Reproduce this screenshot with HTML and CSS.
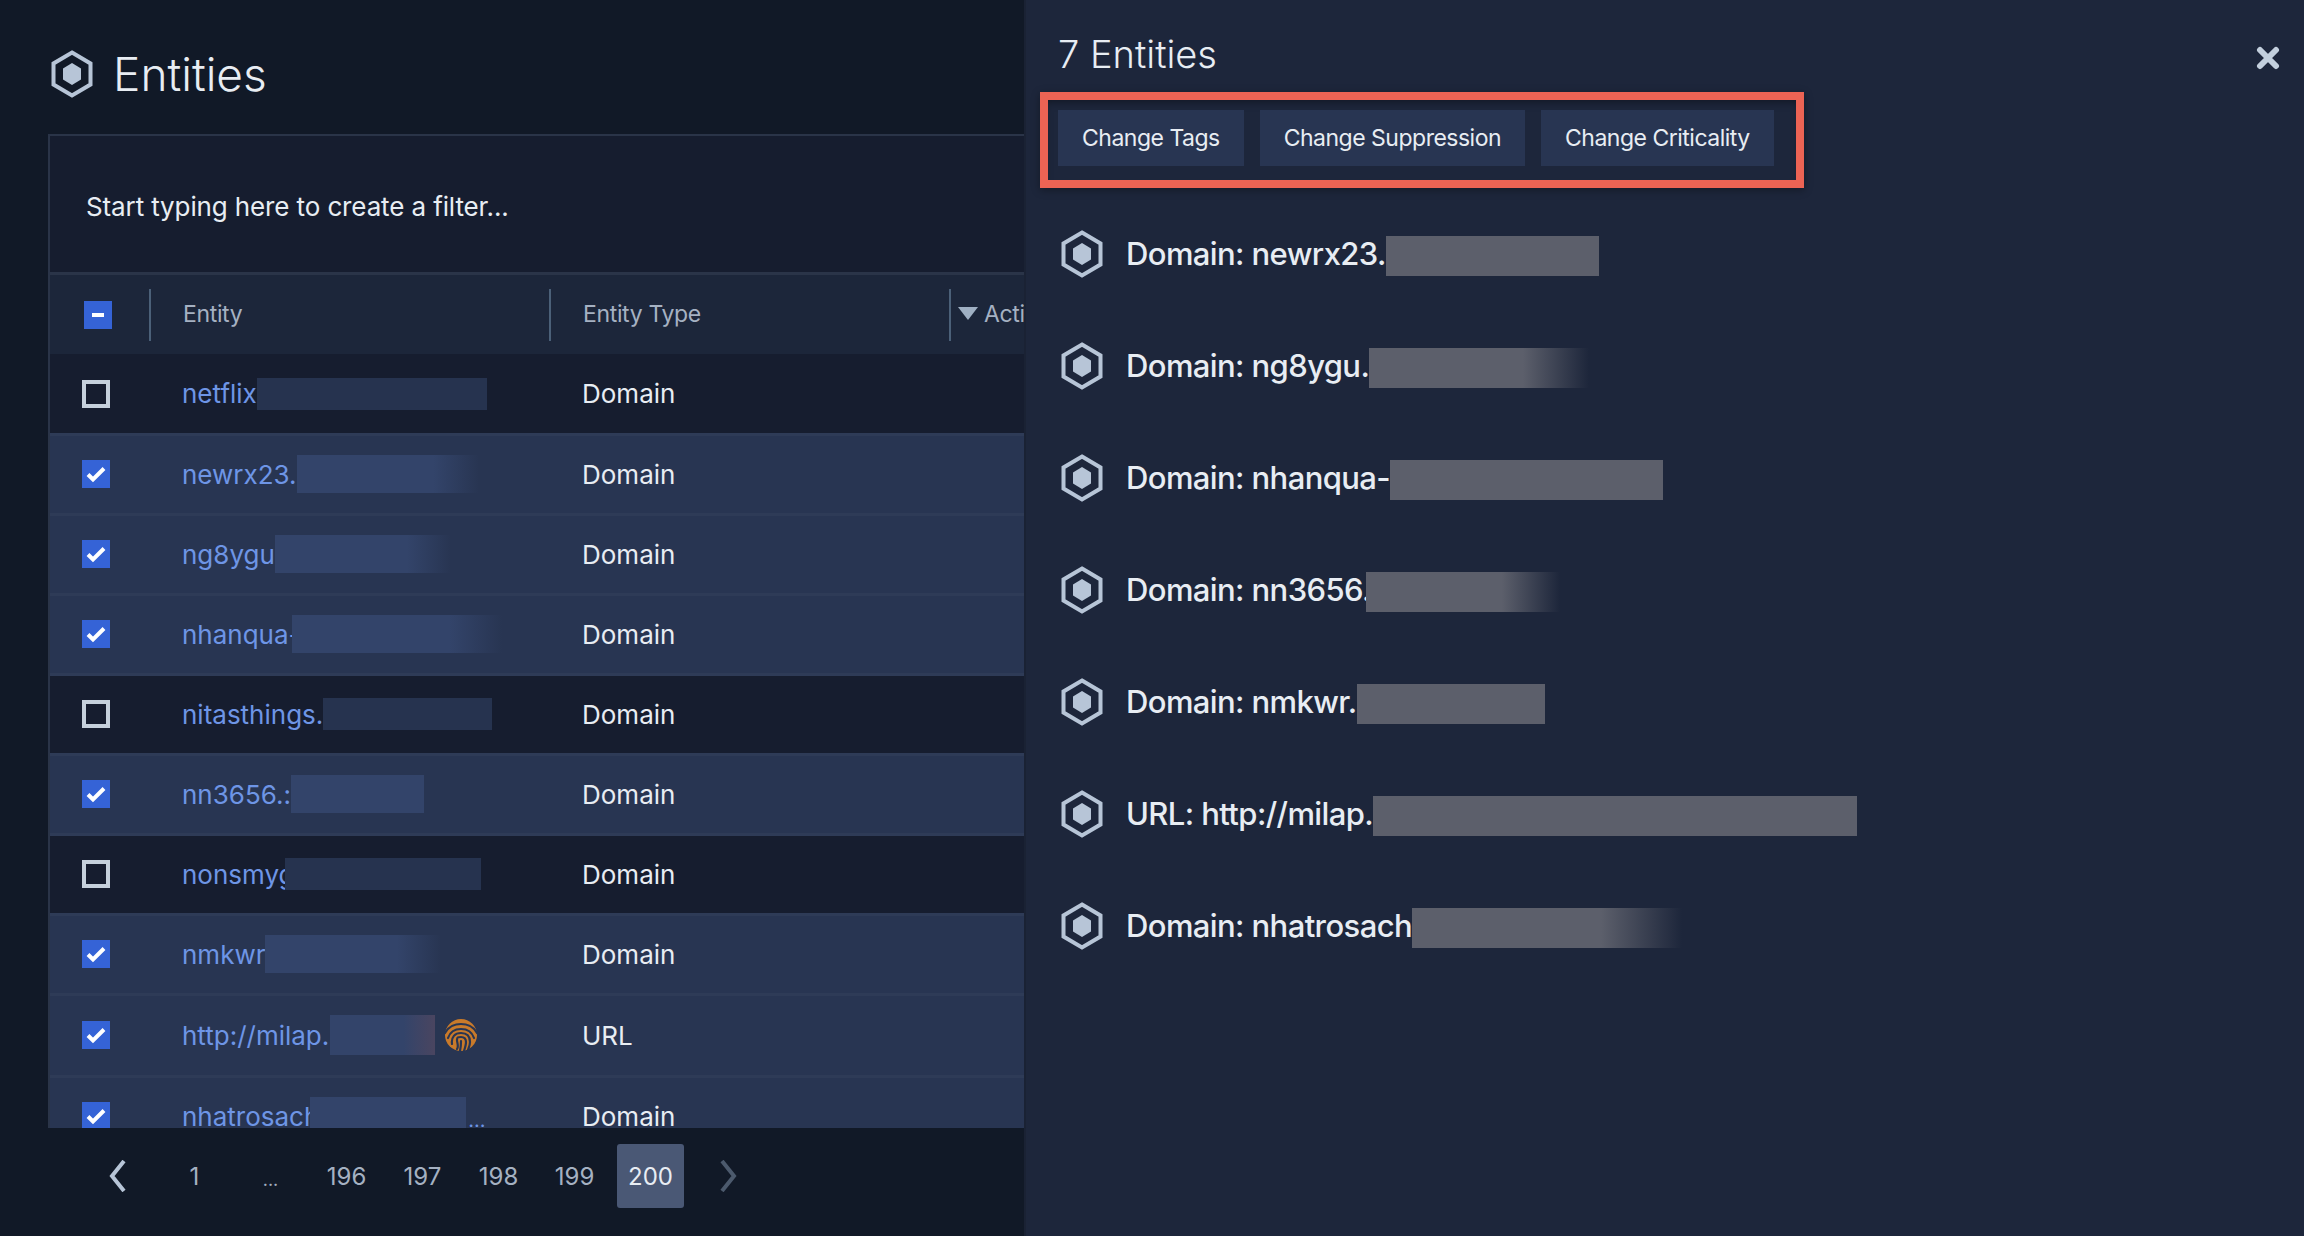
FILE: index.html
```html
<!DOCTYPE html>
<html>
<head>
  <title>Entities</title>
  <link rel="stylesheet" href="styles.css">
</head>
<body>
  <svg class="defs" width="0" height="0">
    <symbol id="hex" viewBox="0 0 42 48">
      <path d="M21 2.500 39.500 13.500v21L21 45.500 2.500 34.500v-21z" fill="none" stroke="#b7c5d7" stroke-width="4"/>
      <path d="M21 13 30 18.500v11L21 35 12 29.500v-11z" fill="#b7c5d7"/>
    </symbol>
    <symbol id="tick" viewBox="0 0 28 28">
      <path d="M6 14.500l5 5L22 8.500" fill="none" stroke="#fff" stroke-width="4"/>
    </symbol>
  </svg>

  <div class="list-pane">
    <div class="page-title">
      <svg class="hex"><use href="#hex"/></svg>
      <h1>Entities</h1>
    </div>

    <div class="table">
      <div class="filter">Start typing here to create a filter...</div>
      <div class="table-head">
        <div class="head-check"><span class="check on minus"></span></div>
        <div class="head-cell">Entity</div>
        <div class="head-cell">Entity Type</div>
        <div class="head-cell"><span class="sort"></span>Actions</div>
      </div>

      <div class="row">
        <div class="row-check"><span class="check"></span></div>
        <div class="name">netflix<span class="smudge" style="width:230px"></span></div>
        <div class="type">Domain</div>
      </div>
      <div class="row picked">
        <div class="row-check"><span class="check on"><svg><use href="#tick"/></svg></span></div>
        <div class="name">newrx23.<span class="smudge fade" style="width:182px"></span></div>
        <div class="type">Domain</div>
      </div>
      <div class="row picked">
        <div class="row-check"><span class="check on"><svg><use href="#tick"/></svg></span></div>
        <div class="name">ng8ygu<span class="smudge fade" style="width:176px"></span></div>
        <div class="type">Domain</div>
      </div>
      <div class="row picked">
        <div class="row-check"><span class="check on"><svg><use href="#tick"/></svg></span></div>
        <div class="name">nhanqua-<span class="smudge fade over" style="width:210px"></span></div>
        <div class="type">Domain</div>
      </div>
      <div class="row">
        <div class="row-check"><span class="check"></span></div>
        <div class="name">nitasthings.<span class="smudge" style="width:169px"></span></div>
        <div class="type">Domain</div>
      </div>
      <div class="row picked">
        <div class="row-check"><span class="check on"><svg><use href="#tick"/></svg></span></div>
        <div class="name">nn3656.:<span class="smudge" style="width:133px"></span></div>
        <div class="type">Domain</div>
      </div>
      <div class="row">
        <div class="row-check"><span class="check"></span></div>
        <div class="name">nonsmyg<span class="smudge over" style="width:196px"></span></div>
        <div class="type">Domain</div>
      </div>
      <div class="row picked">
        <div class="row-check"><span class="check on"><svg><use href="#tick"/></svg></span></div>
        <div class="name">nmkwr<span class="smudge fade" style="width:176px"></span></div>
        <div class="type">Domain</div>
      </div>
      <div class="row picked tall">
        <div class="row-check"><span class="check on"><svg><use href="#tick"/></svg></span></div>
        <div class="name">http://milap.r<span class="smudge warm over" style="width:105px"></span>
          <svg class="print" viewBox="0 0 32 32">
            <circle cx="16" cy="16" r="16" fill="#c97a2a"/>
            <g fill="none" stroke="#283552" stroke-width="2.200" stroke-linecap="round">
              <path d="M0 14C4 7 10 5 16 5s12 2 16 9"/>
              <path d="M3 19c2-6 7-9 13-9s11 3 13 9"/>
              <path d="M7 25c-1-7 3-11 9-11s9 3 9 9c0 3-1 5-2 8"/>
              <path d="M12 30c2-3 0-6 0-9s1-3 4-3 5 2 5 5-1 6-2 9"/>
              <path d="M16 22c0 3 0 6-1 10"/>
            </g>
          </svg>
        </div>
        <div class="type">URL</div>
      </div>
      <div class="row picked">
        <div class="row-check"><span class="check on"><svg><use href="#tick"/></svg></span></div>
        <div class="name">nhatrosach<span class="smudge over" style="width:156px"></span><span class="dots">...</span></div>
        <div class="type">Domain</div>
      </div>
    </div>

    <div class="pager">
      <svg class="chev" viewBox="0 0 19 32"><path d="M16 1 4 16l12 15" fill="none" stroke="#b7c5d7" stroke-width="4"/></svg>
      <div class="pages">
        <span class="page">1</span>
        <span class="page small">...</span>
        <span class="page">196</span>
        <span class="page">197</span>
        <span class="page">198</span>
        <span class="page">199</span>
        <span class="page current">200</span>
      </div>
      <svg class="chev" viewBox="0 0 19 32"><path d="M3 1l12 15L3 31" fill="none" stroke="#4c5a6d" stroke-width="4"/></svg>
    </div>
  </div>

  <div class="side-pane">
    <div class="side-head">
      <h2>7 Entities</h2>
      <svg class="close" viewBox="0 0 24 24"><path d="M4 4l16 16M20 4 4 20" fill="none" stroke="#c3cfdd" stroke-width="6" stroke-linecap="round"/></svg>
    </div>

    <div class="actions">
      <button>Change Tags</button>
      <button>Change Suppression</button>
      <button>Change Criticality</button>
    </div>

    <ul class="picked-list">
      <li><svg class="hex"><use href="#hex"/></svg>Domain: newrx23.<span class="smudge-light" style="width:213px"></span></li>
      <li><svg class="hex"><use href="#hex"/></svg>Domain: ng8ygu.<span class="smudge-light fade" style="width:220px"></span></li>
      <li><svg class="hex"><use href="#hex"/></svg>Domain: nhanqua-<span class="smudge-light" style="width:273px"></span></li>
      <li><svg class="hex"><use href="#hex"/></svg>Domain: nn3656.<span class="smudge-light fade over" style="width:194px"></span></li>
      <li><svg class="hex"><use href="#hex"/></svg>Domain: nmkwr.<span class="smudge-light" style="width:188px"></span></li>
      <li><svg class="hex"><use href="#hex"/></svg>URL: http://milap.<span class="smudge-light" style="width:484px"></span></li>
      <li><svg class="hex"><use href="#hex"/></svg>Domain: nhatrosach<span class="smudge-light fade" style="width:270px"></span></li>
    </ul>
  </div>
</body>
</html>
```

FILE: styles.css
```css
body {
  margin: 0;
  height: 1236px;
  display: flex;
  overflow: hidden;
  background-color: #111927;
  color: #e8edf3;
  font-family: "Inter", "Noto Sans", sans-serif;
  font-size: 26px;
}

.defs {
  position: absolute;
}

.hex {
  width: 42px;
  height: 48px;
  flex-shrink: 0;
}

/* left side, the table */
.list-pane {
  width: 1024px;
  height: 1236px;
  flex-shrink: 0;
  display: flex;
  flex-direction: column;
  overflow: hidden;
}

.page-title {
  height: 134px;
  box-sizing: border-box;
  padding: 50px 0 0 51px;
  display: flex;
  align-items: flex-start;
  gap: 20px;
}

.page-title h1 {
  margin: 0;
  font-size: 46px;
  font-weight: 300;
  line-height: 48px;
}

.table {
  height: 994px;
  width: 976px;
  box-sizing: border-box;
  margin-left: 48px;
  background-color: #161d2f;
  border-top: 2px solid #2a3448;
  border-left: 2px solid #2a3448;
  overflow: hidden;
}

.filter {
  height: 139px;
  box-sizing: border-box;
  padding: 5px 0 0 36px;
  display: flex;
  align-items: center;
  border-bottom: 3px solid #2a3448;
  letter-spacing: -0.12px;
}

.table-head {
  height: 79px;
  display: grid;
  grid-template-columns: 99px 400px 400px 400px;
  align-items: center;
  background-color: #1c263a;
  color: #a5b1c2;
  font-size: 23px;
  letter-spacing: -0.35px;
  white-space: nowrap;
}

.head-check {
  padding-left: 34px;
  display: flex;
}

.head-cell {
  height: 52px;
  box-sizing: border-box;
  padding: 0 0 2px 32px;
  border-left: 2px solid #4b6078;
  display: flex;
  align-items: center;
}

.sort {
  width: 0;
  height: 0;
  margin: 0 6px 0 -25px;
  border-left: 10px solid transparent;
  border-right: 10px solid transparent;
  border-top: 13px solid #9fb0c3;
}

.row {
  height: 80px;
  box-sizing: border-box;
  padding-bottom: 1px;
  display: grid;
  grid-template-columns: 99px 400px 1fr;
  align-items: center;
  border-top: 3px solid #2e3b57;
}

.table-head + .row {
  height: 79px;
  padding-bottom: 0;
  border-top: 0;
}

.row.picked {
  background-color: #283552;
}

.row.tall {
  height: 82px;
}

.row-check {
  padding-left: 32px;
  display: flex;
}

.check {
  width: 28px;
  height: 28px;
  box-sizing: border-box;
  border: 4px solid #c5d0dc;
  display: block;
}

.check.on {
  border: 0;
  background-color: #3563d6;
}

.check svg {
  width: 28px;
  height: 28px;
  display: block;
}

.check.minus {
  display: flex;
  align-items: center;
  justify-content: center;
}

.check.minus::after {
  content: "";
  width: 12px;
  height: 4px;
  background-color: #fff;
}

.name {
  padding-left: 33px;
  color: #6e95e6;
  display: flex;
  align-items: center;
  white-space: nowrap;
}

.type {
  padding-left: 33px;
}

.smudge {
  height: 32px;
  flex-shrink: 0;
  background-color: #26334f;
}

.smudge.over {
  margin-left: -9px;
}

.picked .smudge {
  height: 38px;
  background-color: #33446a;
}

.picked .smudge.fade {
  background: linear-gradient(90deg, #33446a 75%, #283552);
}

.picked .smudge.warm {
  height: 40px;
  background: linear-gradient(90deg, #33446a 70%, #4a4560);
}

.dots {
  font-size: 20px;
  padding-top: 8px;
  margin-left: 2px;
}

.print {
  width: 32px;
  height: 32px;
  margin-left: 10px;
}

.pager {
  height: 108px;
  box-sizing: border-box;
  padding: 0 0 12px 108px;
  display: flex;
  align-items: center;
  background-color: #111927;
}

.chev {
  width: 19px;
  height: 32px;
  flex-shrink: 0;
}

.pages {
  display: flex;
  gap: 9px;
  margin: 0 35px 0 34px;
}

.page {
  width: 67px;
  height: 64px;
  border-radius: 3px;
  display: flex;
  align-items: center;
  justify-content: center;
  font-size: 24px;
  color: #a5b1c2;
}

.page.small {
  font-size: 18px;
  padding-top: 6px;
  height: 58px;
}

.page.current {
  background-color: #4a5875;
  color: #e8edf3;
}

/* right side, what is selected */
.side-pane {
  flex: 1;
  box-sizing: border-box;
  padding-left: 14px;
  background-color: #1d263b;
  border-left: 2px solid #1a2234;
}

.side-head {
  height: 92px;
  box-sizing: border-box;
  padding: 30px 24px 0 18px;
  display: flex;
  justify-content: space-between;
  align-items: flex-start;
}

.side-head h2 {
  margin: 0;
  font-size: 38px;
  font-weight: 300;
  line-height: 48px;
}

.close {
  width: 24px;
  height: 24px;
  margin-top: 16px;
}

.actions {
  width: 764px;
  height: 96px;
  box-sizing: border-box;
  padding: 10px 0 0 10px;
  border: 8px solid #ec6354;
  display: flex;
  gap: 16px;
  box-shadow: 0 2px 8px rgba(0, 0, 0, 0.35), inset 0 6px 8px -4px rgba(0, 0, 0, 0.4);
}

.actions button {
  height: 56px;
  flex-shrink: 0;
  padding: 0 24px 0;
  border: 0;
  background-color: #283552;
  color: #e8edf3;
  font-family: inherit;
  font-size: 23px;
  letter-spacing: -0.5px;
  white-space: nowrap;
}

.picked-list {
  list-style: none;
  margin: 42px 0 0;
  padding: 0 0 0 21px;
}

.picked-list li {
  height: 112px;
  display: flex;
  align-items: flex-start;
  gap: 23px;
  font-size: 31px;
  font-weight: 500;
  letter-spacing: -0.6px;
  line-height: 48px;
}

.smudge-light {
  height: 40px;
  margin-top: 6px;
  margin-left: -23px;
  background-color: #5c5f6b;
}

.smudge-light.over {
  margin-left: -28px;
}

.smudge-light.fade {
  background: linear-gradient(90deg, #5c5f6b 70%, #1d263b);
}
```
